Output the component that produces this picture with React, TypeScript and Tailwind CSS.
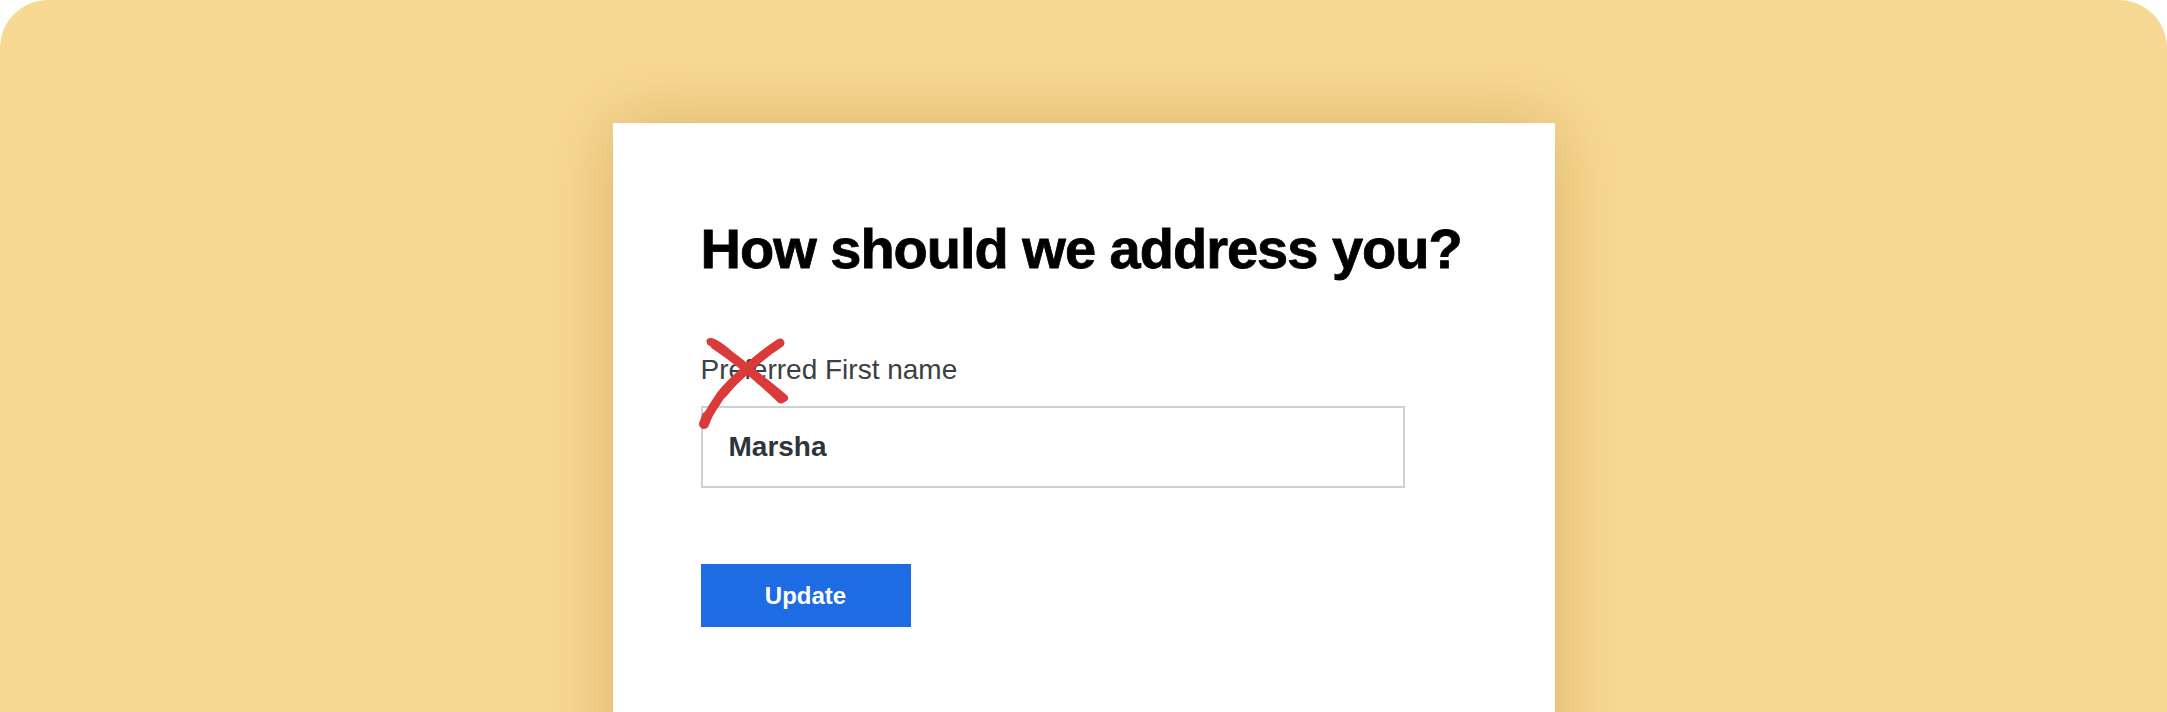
import React from "react";

function ScribbleX() {
  return (
    <svg
      className="absolute left-[-2px] top-[-18px] pointer-events-none"
      width="92"
      height="92"
      viewBox="0 0 92 92"
      fill="none"
    >
      <g stroke="#dc3a3a" strokeLinecap="round" strokeLinejoin="round">
        {/* top-left to bottom-right */}
        <path d="M12 4 C 16 5, 22 9, 30 16 C 46 29, 66 44, 85 60" strokeWidth="8" />
        <path d="M16 7 C 34 19, 60 40, 82 61" strokeWidth="9" />
        <path d="M10 3 L 18 6" strokeWidth="5" />
        {/* top-right to bottom-left */}
        <path d="M81 5 C 70 12, 60 20, 49 30 C 36 42, 26 50, 20 60 C 14 69, 9 76, 6 84" strokeWidth="9" />
        <path d="M78 7 C 58 20, 40 36, 24 56" strokeWidth="8" />
        <path d="M8 78 L 5 86" strokeWidth="10" />
      </g>
    </svg>
  );
}

export default function App() {
  return (
    <div className="h-[712px] w-full overflow-hidden bg-white">
      <div className="flex h-full justify-center rounded-t-[48px] bg-[#f8d994] pt-[123px]">
        <div className="h-[700px] w-[942px] bg-white pl-[88px] pt-[98px] shadow-[0_0_70px_rgba(150,100,0,0.32)]">
          <h1
            className="text-[56px] font-bold leading-[56px] tracking-[-1px] text-black [-webkit-text-stroke:0.8px_#000]"
            style={{ fontFamily: '"Liberation Sans", Arial, sans-serif' }}
          >
            How should we address you?
          </h1>

          <div
            className="mt-[79px]"
            style={{ fontFamily: '"Liberation Sans", Arial, sans-serif' }}
          >
            <label className="relative block text-[28px] leading-[28px] text-[#3b4046]">
              Preferred First name
              <ScribbleX />
            </label>
            <input
              type="text"
              defaultValue="Marsha"
              className="mt-[22px] box-border block h-[82px] w-[704px] border-2 border-[#cdd1d5] bg-white pl-[26px] text-[28px] font-bold text-[#2e343b] outline-none"
            />
            <button
              type="button"
              className="mt-[76px] block h-[63px] w-[210px] bg-[#1d6ce4] text-[24px] font-bold text-white"
            >
              Update
            </button>
          </div>
        </div>
      </div>
    </div>
  );
}
